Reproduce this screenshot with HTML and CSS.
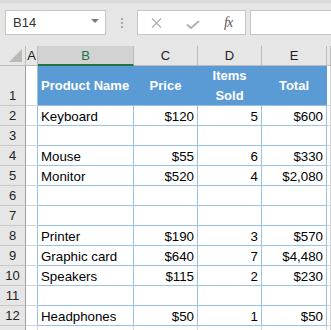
FILE: index.html
```html
<!DOCTYPE html>
<html lang="en">
<head>
    <meta charset="UTF-8">
    <meta name="viewport" content="width=device-width, initial-scale=1.0">
    <title>Products - Sheet</title>
    <link rel="stylesheet" href="styles.css">
</head>
<body>
    <div class="formula-bar">
        <div class="name-box">
            <span>B14</span>
            <span class="drop"></span>
        </div>
        <div class="grip"><i></i><i></i><i></i></div>
        <div class="fx-buttons">
            <svg class="ico-x" width="11" height="10" viewBox="0 0 11 10"><path d="M1 0.5 L10 9.5 M10 0.5 L1 9.5" stroke="#b4b4b4" stroke-width="1.5" fill="none"/></svg>
            <svg class="ico-ok" width="14" height="9" viewBox="0 0 14 9"><path d="M1 4.5 L5 8 L13 1" stroke="#b4b4b4" stroke-width="2.2" fill="none"/></svg>
            <span class="fx">fx</span>
        </div>
        <div class="formula-input"></div>
    </div>

    <div class="sheet">
        <!-- column headers -->
        <div class="corner"><span class="tri"></span></div>
        <div class="ch">A</div>
        <div class="ch sel">B</div>
        <div class="ch">C</div>
        <div class="ch">D</div>
        <div class="ch">E</div>
        <div class="ch"></div>

        <!-- row 1 -->
        <div class="rh bottom">1</div>
        <div class="cell a"></div>
        <div class="th left">Product Name</div>
        <div class="th">Price</div>
        <div class="th">Items<br>Sold</div>
        <div class="th">Total</div>
        <div class="cell"></div>

        <div class="rh">2</div>
        <div class="cell a"></div>
        <div class="td">Keyboard</div>
        <div class="td num">$120</div>
        <div class="td num">5</div>
        <div class="td num">$600</div>
        <div class="cell"></div>

        <div class="rh">3</div>
        <div class="cell a"></div>
        <div class="td"></div>
        <div class="td"></div>
        <div class="td"></div>
        <div class="td"></div>
        <div class="cell"></div>

        <div class="rh">4</div>
        <div class="cell a"></div>
        <div class="td">Mouse</div>
        <div class="td num">$55</div>
        <div class="td num">6</div>
        <div class="td num">$330</div>
        <div class="cell"></div>

        <div class="rh">5</div>
        <div class="cell a"></div>
        <div class="td">Monitor</div>
        <div class="td num">$520</div>
        <div class="td num">4</div>
        <div class="td num">$2,080</div>
        <div class="cell"></div>

        <div class="rh">6</div>
        <div class="cell a"></div>
        <div class="td"></div>
        <div class="td"></div>
        <div class="td"></div>
        <div class="td"></div>
        <div class="cell"></div>

        <div class="rh">7</div>
        <div class="cell a"></div>
        <div class="td"></div>
        <div class="td"></div>
        <div class="td"></div>
        <div class="td"></div>
        <div class="cell"></div>

        <div class="rh">8</div>
        <div class="cell a"></div>
        <div class="td">Printer</div>
        <div class="td num">$190</div>
        <div class="td num">3</div>
        <div class="td num">$570</div>
        <div class="cell"></div>

        <div class="rh">9</div>
        <div class="cell a"></div>
        <div class="td">Graphic card</div>
        <div class="td num">$640</div>
        <div class="td num">7</div>
        <div class="td num">$4,480</div>
        <div class="cell"></div>

        <div class="rh">10</div>
        <div class="cell a"></div>
        <div class="td">Speakers</div>
        <div class="td num">$115</div>
        <div class="td num">2</div>
        <div class="td num">$230</div>
        <div class="cell"></div>

        <div class="rh">11</div>
        <div class="cell a"></div>
        <div class="td"></div>
        <div class="td"></div>
        <div class="td"></div>
        <div class="td"></div>
        <div class="cell"></div>

        <div class="rh">12</div>
        <div class="cell a"></div>
        <div class="td">Headphones</div>
        <div class="td num">$50</div>
        <div class="td num">1</div>
        <div class="td num">$50</div>
        <div class="cell"></div>

        <!-- row 13, only its top edge is in view -->
        <div class="rh"></div>
        <div class="cell"></div>
        <div class="cell"></div>
        <div class="cell"></div>
        <div class="cell"></div>
        <div class="cell"></div>
        <div class="cell"></div>
    </div>
</body>
</html>
```

FILE: styles.css
```css
body {
    margin: 0;
    width: 331px;
    height: 330px;
    overflow: hidden;
    background: #ffffff;
    font-family: "Liberation Sans", Arial, sans-serif;
}

/* formula bar */
.formula-bar {
    height: 46px;
    box-sizing: border-box;
    background: #e6e6e6;
    border-top: 3px solid #dadada;
    padding: 7px 0 0 5px;
    display: flex;
    align-items: flex-start;
}

.name-box {
    width: 101px;
    height: 25px;
    box-sizing: border-box;
    background: white;
    border: 1px solid #c6c6c6;
    display: flex;
    align-items: center;
    justify-content: space-between;
    padding: 0 6px 0 7px;
    font-size: 13px;
    color: #333;
}

.drop {
    width: 0;
    height: 0;
    border-left: 4px solid transparent;
    border-right: 4px solid transparent;
    border-top: 4px solid #7a7a7a;
    margin-top: -3px;
}

.grip {
    width: 31px;
    height: 25px;
    display: flex;
    flex-direction: column;
    align-items: center;
    justify-content: center;
    gap: 2px;
}

.grip i {
    width: 2px;
    height: 2px;
    background: #a8a8a8;
}

.fx-buttons {
    width: 109px;
    height: 25px;
    box-sizing: border-box;
    background: white;
    border: 1px solid #c6c6c6;
    display: flex;
    align-items: center;
    padding-left: 13px;
}

.ico-x {
    margin-top: 1px;
}

.ico-ok {
    margin-left: 24px;
    margin-top: 3px;
}

.fx {
    margin-left: 24px;
    font-family: "Liberation Serif", serif;
    font-style: italic;
    font-size: 14px;
    color: #555;
    letter-spacing: -1px;
}

.formula-input {
    flex: 1;
    height: 25px;
    margin-left: 4px;
    box-sizing: border-box;
    background: white;
    border: 1px solid #c6c6c6;
    border-right: none;
}

/* grid */
.sheet {
    display: grid;
    grid-template-columns: 26px 12px 96px 64px 64px 65px 1fr;
    grid-template-rows: 20px 40px repeat(12, 20px);
    font-size: 13.3px;
}

.sheet > div {
    box-sizing: border-box;
    display: flex;
    align-items: center;
    white-space: nowrap;
    overflow: hidden;
}

.corner {
    background: #e6e6e6;
    border-right: 1px solid #bcbcbc;
    border-bottom: 1px solid #bcbcbc;
    justify-content: flex-end;
    align-items: flex-end !important;
    padding: 0 3px 3px 0;
}

.tri {
    width: 0;
    height: 0;
    border-left: 13px solid transparent;
    border-bottom: 13px solid #b9b9b9;
}

.ch {
    background: #e6e6e6;
    border-right: 1px solid #bcbcbc;
    border-bottom: 1px solid #bcbcbc;
    justify-content: center;
    color: #222;
    font-size: 13px;
}

.ch.sel {
    background: #d2d2d2;
    color: #217346;
    border-bottom: 2px solid #217346;
}

.rh {
    background: #e6e6e6;
    border-right: 1px solid #9f9f9f;
    border-bottom: 1px solid #c8c8c8;
    justify-content: center;
    color: #222;
    font-size: 13px;
}

.rh.bottom {
    align-items: flex-end !important;
    padding-bottom: 2px;
}

.cell {
    border-right: 1px solid #d4d4d4;
    border-bottom: 1px solid #d4d4d4;
}

.cell.a {
    border-right-color: #9bc2e6;
}

.th {
    background: #5b9bd5;
    color: white;
    font-weight: bold;
    font-size: 13px;
    justify-content: center;
    text-align: center;
    line-height: 20px;
    border-right: 1px solid #5b9bd5;
    border-bottom: 1px solid #9bc2e6;
}

.th.left {
    justify-content: flex-start;
    padding-left: 3px;
}

.td {
    color: #000;
    padding: 2px 3px 0 3px;
    border-right: 1px solid #9bc2e6;
    border-bottom: 1px solid #9bc2e6;
}

.num {
    justify-content: flex-end;
}
```
